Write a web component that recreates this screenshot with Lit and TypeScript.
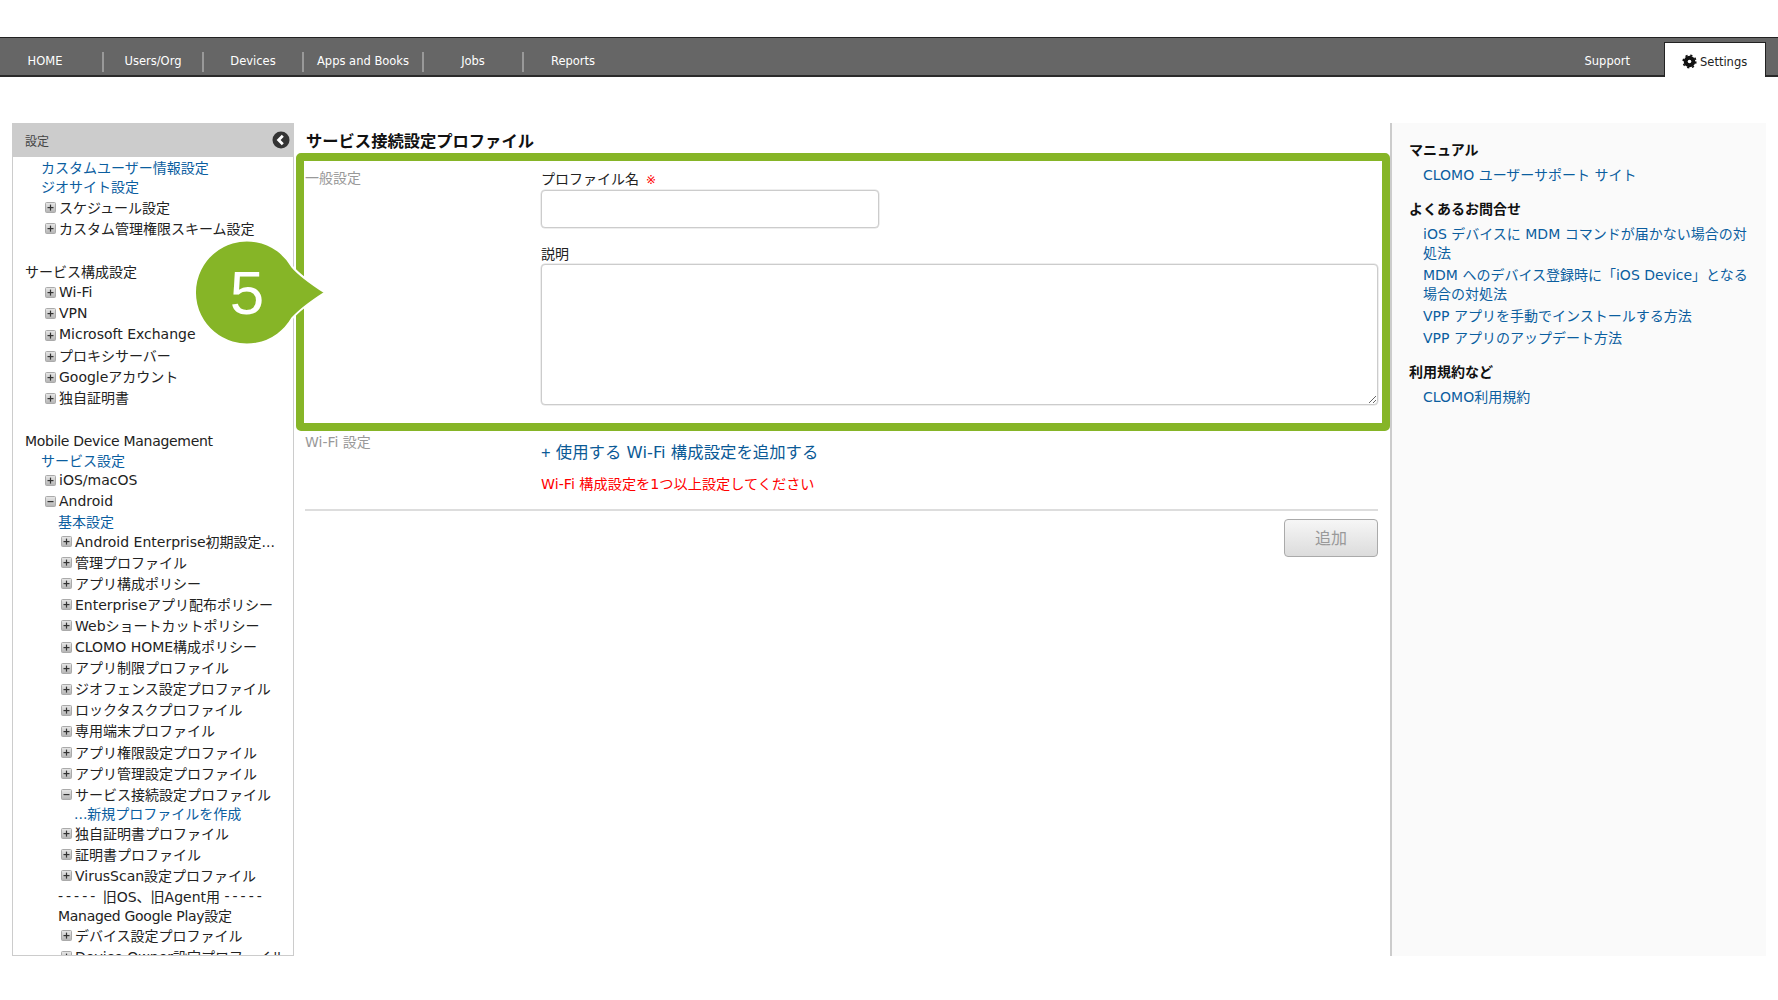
import { LitElement, html, css, svg } from "lit";
import { customElement } from "lit/decorators.js";

type Row = { t: string; k: "link1" | "link2" | "link3" | "head" | "t1" | "t2" | "plain"; open?: boolean; h?: number; mt?: number; tight?: boolean };

const rows: Row[] = [
  { t: "カスタムユーザー情報設定", k: "link1", h: 19 },
  { t: "ジオサイト設定", k: "link1", h: 20 },
  { t: "スケジュール設定", k: "t1" },
  { t: "カスタム管理権限スキーム設定", k: "t1" },
  { t: "サービス構成設定", k: "head", mt: 22 },
  { t: "Wi-Fi", k: "t1" },
  { t: "VPN", k: "t1" },
  { t: "Microsoft Exchange", k: "t1" },
  { t: "プロキシサーバー", k: "t1" },
  { t: "Googleアカウント", k: "t1" },
  { t: "独自証明書", k: "t1" },
  { t: "Mobile Device Management", k: "head", mt: 23.5, h: 19, tight: true },
  { t: "サービス設定", k: "link1", h: 19 },
  { t: "iOS/macOS", k: "t1" },
  { t: "Android", k: "t1", open: true },
  { t: "基本設定", k: "link2", h: 18.5 },
  { t: "Android Enterprise初期設定...", k: "t2" },
  { t: "管理プロファイル", k: "t2" },
  { t: "アプリ構成ポリシー", k: "t2" },
  { t: "Enterpriseアプリ配布ポリシー", k: "t2" },
  { t: "Webショートカットポリシー", k: "t2" },
  { t: "CLOMO HOME構成ポリシー", k: "t2" },
  { t: "アプリ制限プロファイル", k: "t2" },
  { t: "ジオフェンス設定プロファイル", k: "t2" },
  { t: "ロックタスクプロファイル", k: "t2" },
  { t: "専用端末プロファイル", k: "t2" },
  { t: "アプリ権限設定プロファイル", k: "t2" },
  { t: "アプリ管理設定プロファイル", k: "t2" },
  { t: "サービス接続設定プロファイル", k: "t2", open: true },
  { t: "...新規プロファイルを作成", k: "link3", h: 18 },
  { t: "独自証明書プロファイル", k: "t2" },
  { t: "証明書プロファイル", k: "t2" },
  { t: "VirusScan設定プロファイル", k: "t2" },
  { t: "", k: "plain", h: 20 },
  { t: "Managed Google Play設定", k: "plain", h: 18.5, tight: true },
  { t: "デバイス設定プロファイル", k: "t2" },
  { t: "Device Owner設定プロファイル", k: "t2" },
];

const box = (open?: boolean) => html`<svg class="box" width="11" height="11" viewBox="0 0 11 11">
  <defs><linearGradient id="bg" x1="0" y1="0" x2="0" y2="1"><stop offset="0" stop-color="#e8e8e8"/><stop offset="1" stop-color="#b4b4b4"/></linearGradient></defs>
  <rect x="0.5" y="0.5" width="10" height="10" rx="1" fill="url(#bg)" stroke="#aaa"/>
  <rect x="2.5" y="5" width="6" height="1.2" fill="#333"/>
  ${open ? "" : svg`<rect x="4.9" y="2.6" width="1.2" height="6" fill="#333"/>`}
</svg>`;

@customElement("app-root")
export class AppRoot extends LitElement {
  static styles = css`
    :host {
      display: block;
      position: relative;
      width: 1778px;
      height: 1000px;
      background: #fff;
      overflow: hidden;
      font-family: "DejaVu Sans", "Noto Sans CJK JP", sans-serif;
      font-size: 14px;
      color: #222;
    }
    a { color: #0b5e9f; text-decoration: none; }

    .nav {
      margin-top: 37px;
      height: 40px;
      box-sizing: border-box;
      background: #666;
      border-top: 1px solid #222;
      border-bottom: 2px solid #2a2a2a;
      display: flex;
      align-items: stretch;
      color: #fff;
      font-size: 11.5px;
      position: relative;
    }
    .cell {
      width: 100px;
      display: flex;
      align-items: center;
      justify-content: center;
      position: relative;
      padding-top: 8px;
      box-sizing: border-box;
    }
    .cell.home { width: 103px; padding-right: 13px; }
    .cell.apps { width: 120px; }
    .cell.sep::before {
      content: "";
      position: absolute;
      left: -1px;
      top: 14px;
      width: 2px;
      height: 20px;
      background: #999;
    }
    .spacer { flex: 1; }
    .support { display: flex; align-items: center; margin-right: 34px; padding-top: 8px; }
    .tab {
      width: 102px;
      margin: 4px 12px -2px 0;
      box-sizing: border-box;
      background: #fff;
      border: 1px solid #222;
      border-bottom: none;
      color: #222;
      display: flex;
      align-items: center;
      gap: 3px;
      padding: 3px 0 0 17px;
    }

    .body {
      display: flex;
      margin-top: 46px;
      padding: 0 12px;
      height: 833px;
    }

    .side {
      width: 282px;
      box-sizing: border-box;
      border: 1px solid #ccc;
      border-top: none;
      overflow: hidden;
      flex: none;
    }
    .side-h {
      height: 34px;
      margin: 0 -1px;
      background: #ccc;
      display: flex;
      align-items: center;
      justify-content: space-between;
      padding: 0 4px 0 13px;
      font-size: 12px;
      color: #444;
    }
    .tree { display: flex; flex-direction: column; }
    .row {
      display: flex;
      align-items: center;
      height: 21.1px;
      white-space: nowrap;
      flex: none;
    }
    .tight { letter-spacing: -0.3px; }
    .dash { letter-spacing: 3px; }
    .box { flex: none; margin: 2px 3px 0 0; }
    .head { padding-left: 12px; }
    .t1 { padding-left: 32px; }
    .t2 { padding-left: 48px; }
    .link1 { padding-left: 28px; }
    .link2 { padding-left: 45px; }
    .link3 { padding-left: 61px; }
    .plain { padding-left: 45px; white-space: pre; }

    .main {
      flex: 1;
      min-width: 0;
      padding-left: 2px;
    }
    h1 {
      margin: 0;
      height: 30px;
      padding: 6px 0 0 10px;
      box-sizing: border-box;
      font-size: 16.3px;
      line-height: 22px;
      font-weight: 700;
      color: #111;
      font-family: "Noto Sans CJK JP", sans-serif;
    }
    .frame {
      height: 278px;
      box-sizing: border-box;
      border: 8px solid #86b527;
      border-radius: 5px;
      padding: 9px 4px 0 1px;
      display: grid;
      grid-template-columns: 236px 1fr;
    }
    .sec { color: #999; font-size: 14px; line-height: 18px; }
    .frame .sec { margin-top: -1px; }
    .lab { line-height: 18px; height: 18px; color: #222; }
    .req { color: #f00; font-size: 12px; margin-left: 7px; }
    input, textarea {
      display: block;
      box-sizing: border-box;
      border: 1px solid #ccc;
      box-shadow: 0 0 0 0.5px #ddd;
      border-radius: 4px;
      background: #fff;
      outline: none;
      margin: 0;
    }
    input { width: 338px; height: 38px; margin: 2px 0 17px; }
    textarea { width: 837px; height: 141px; margin-top: 1px; }

    .lower { padding: 2px 12px 0 9px; }
    .wifi { display: grid; grid-template-columns: 236px 1fr; height: 76px; }
    .add { display: block; font-size: 16.4px; line-height: 22px; margin-top: 8px; color: #0b5a96; }
    .plus { font-family: "Liberation Sans", sans-serif; }
    .err { color: #f00; font-size: 14.2px; line-height: 18px; margin-top: 11px; }
    .rule { height: 2px; background: #ddd; }
    .actions { display: flex; justify-content: flex-end; margin-top: 8px; }
    .btn {
      width: 94px;
      height: 38px;
      box-sizing: border-box;
      border: 1px solid #aaa;
      border-radius: 4px;
      background: linear-gradient(#f6f6f6, #dcdcdc);
      color: #999;
      font-size: 16px;
      font-family: inherit;
      padding: 0 0 3px;
    }

    .aside {
      width: 376px;
      box-sizing: border-box;
      flex: none;
      border-left: 2px solid #ccc;
      background: #fafafa;
      padding: 16px 0 0 17px;
    }
    .aside h2 {
      margin: 0;
      font-size: 14px;
      line-height: 20px;
      font-weight: 700;
      color: #111;
      font-family: "Noto Sans CJK JP", sans-serif;
    }
    .aside ul { list-style: none; margin: 7px 0 10px; padding: 0 0 0 14px; }
    .aside li { line-height: 19px; padding-bottom: 3px; }
    .aside a { color: #0b5e9f; }

    .callout {
      position: absolute;
      left: 193px;
      top: 238px;
      width: 136px;
      height: 109px;
    }
    .callout svg { display: block; }
    .num {
      position: absolute;
      left: 0;
      top: 0;
      width: 108px;
      height: 109px;
      text-align: center;
      font: 62px/109px "Liberation Sans", sans-serif;
      color: #fff;
    }
  `;

  private renderRow(r: Row) {
    const style = `${r.h ? `height:${r.h}px;` : ""}${r.mt ? `margin-top:${r.mt}px;` : ""}`;
    const tight = r.tight ? "tight" : "";
    if (r.k.startsWith("link")) return html`<a class="row ${r.k}" style=${style}>${r.t}</a>`;
    if (r.k === "t1" || r.k === "t2") return html`<div class="row ${r.k}">${box(r.open)}${r.t}</div>`;
    if (!r.t)
      return html`<div class="row ${r.k}" style=${style}><span class="dash">-----</span> 旧OS、旧Agent用 <span class="dash">-----</span></div>`;
    return html`<div class="row ${r.k} ${tight}" style=${style}>${r.t}</div>`;
  }

  render() {
    return html`
      <div class="nav">
        <div class="cell home">HOME</div>
        <div class="cell sep">Users/Org</div>
        <div class="cell sep">Devices</div>
        <div class="cell sep apps">Apps and Books</div>
        <div class="cell sep">Jobs</div>
        <div class="cell sep">Reports</div>
        <div class="spacer"></div>
        <div class="support">Support</div>
        <div class="tab">
          <svg width="15" height="15" viewBox="0 0 15 15">
            <circle cx="7.5" cy="7.5" r="5.8" fill="#111"/>
            <circle cx="7.5" cy="7.5" r="6.3" fill="none" stroke="#111" stroke-width="1.6" stroke-dasharray="2.2 2.75"/>
            <circle cx="7.5" cy="7.5" r="1.8" fill="#fff"/>
          </svg>
          Settings
        </div>
      </div>

      <div class="body">
        <nav class="side">
          <div class="side-h">
            <span>設定</span>
            <svg width="18" height="18" viewBox="0 0 18 18">
              <circle cx="9" cy="9" r="8.5" fill="#333"/>
              <path d="M10.8 4.8 L6.6 9 L10.8 13.2" fill="none" stroke="#fff" stroke-width="2.8"/>
            </svg>
          </div>
          <div class="tree">${rows.map((r) => this.renderRow(r))}</div>
        </nav>

        <main class="main">
          <h1>サービス接続設定プロファイル</h1>
          <section class="frame">
            <div class="sec">一般設定</div>
            <div>
              <div class="lab">プロファイル名<span class="req">※</span></div>
              <input type="text" />
              <div class="lab">説明</div>
              <textarea></textarea>
            </div>
          </section>
          <div class="lower">
            <div class="wifi">
              <div class="sec">Wi-Fi 設定</div>
              <div>
                <a class="add"><span class="plus">+</span> 使用する Wi-Fi 構成設定を追加する</a>
                <div class="err">Wi-Fi 構成設定を1つ以上設定してください</div>
              </div>
            </div>
            <div class="rule"></div>
            <div class="actions"><button class="btn">追加</button></div>
          </div>
        </main>

        <aside class="aside">
          <h2>マニュアル</h2>
          <ul><li><a>CLOMO ユーザーサポート サイト</a></li></ul>
          <h2>よくあるお問合せ</h2>
          <ul>
            <li><a>iOS デバイスに MDM コマンドが届かない場合の対<br />処法</a></li>
            <li><a>MDM へのデバイス登録時に「iOS Device」となる<br />場合の対処法</a></li>
            <li><a>VPP アプリを手動でインストールする方法</a></li>
            <li><a>VPP アプリのアップデート方法</a></li>
          </ul>
          <h2>利用規約など</h2>
          <ul><li><a>CLOMO利用規約</a></li></ul>
        </aside>
      </div>

      <div class="callout">
        <svg width="136" height="109" viewBox="0 0 136 109">
          <path d="M99 28.5 A52 52 0 1 0 99 80.5 Q108 70 132 54.5 Q108 39 99 28.5 Z" fill="#86b527" stroke="#fff" stroke-width="2"/>
        </svg>
        <div class="num">5</div>
      </div>
    `;
  }
}
